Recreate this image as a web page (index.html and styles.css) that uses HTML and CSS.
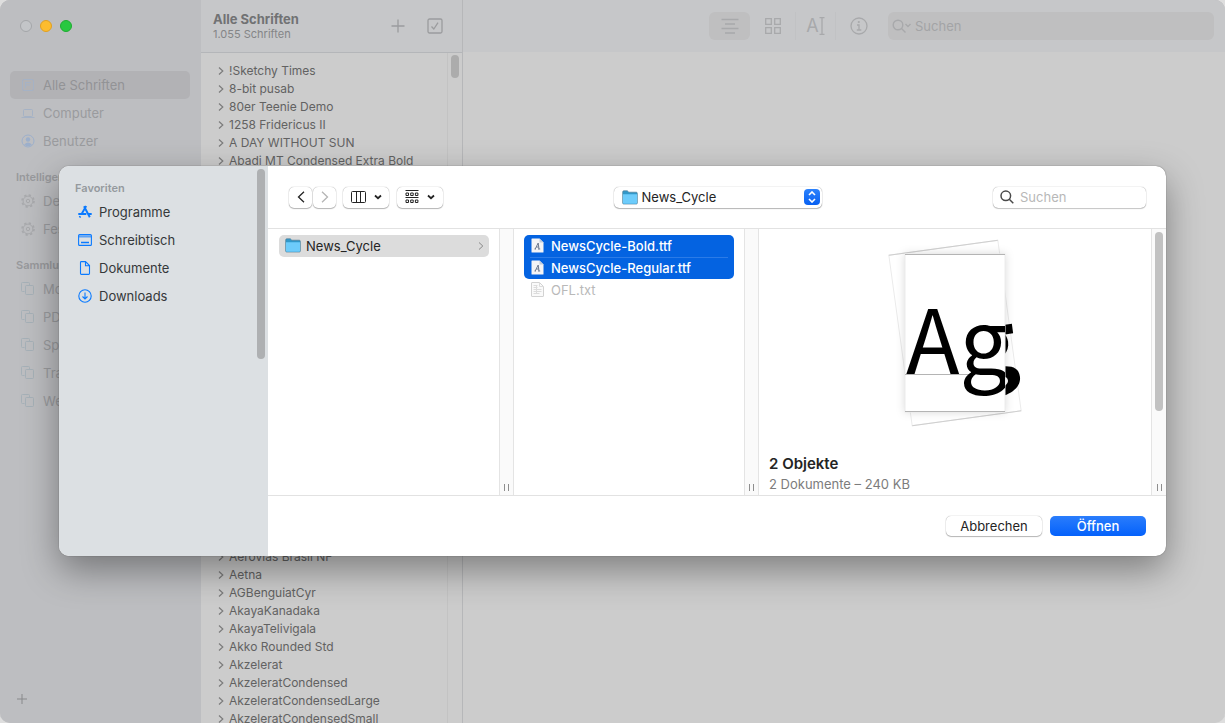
FILE: index.html
```html
<!DOCTYPE html>
<html lang="de">
<head>
<meta charset="utf-8">
<meta name="viewport" content="width=device-width, initial-scale=1">
<title>Schriftsammlung</title>
<link rel="stylesheet" href="styles.css">
</head>
<body>
<svg class="defs" width="0" height="0" aria-hidden="true">
  <symbol id="copy" viewBox="0 0 14 14"><path d="M3.500 9.500h-2a1 1 0 0 1-1-1v-7a1 1 0 0 1 1-1h6a1 1 0 0 1 1 1v1.500"/><rect x="4.500" y="3.500" width="8" height="9" rx="1"/></symbol>
  <symbol id="gear" viewBox="0 0 14 14"><circle cx="7" cy="7" r="4.900"/><circle cx="7" cy="7" r="1.700"/><circle cx="7" cy="7" r="6" stroke-width="1.600" stroke-dasharray="2.300 2.410"/></symbol>
  <symbol id="chevron" viewBox="0 0 6 10"><path d="M1 1.500 4.800 5 1 8.500"/></symbol>
  <symbol id="down" viewBox="0 0 8 6"><path d="M1 1.500 4 4.200 7 1.500"/></symbol>
  <symbol id="folder" viewBox="0 0 16 15"><path d="M.7 2Q.7.8 1.800.8h3.500l1.500 1.400h7.400q1.100 0 1.100 1.100V13q0 1-1 1H1.700q-1 0-1-1z" fill="#3198c9" stroke="#507f99" stroke-width=".7"/><path d="M1 4.300h14V13q0 .7-.8.7H1.800Q1 13.700 1 13z" fill="#6dccfb"/></symbol>
  <symbol id="fontfile" viewBox="0 0 13 15"><path d="M.5 1q0-.5.5-.5h7.500l4 4V14q0 .5-.5.5H1q-.5 0-.5-.5z" fill="#f4f4f6"/><path d="m8.500.500 4 4h-3.500q-.5 0-.5-.5z" fill="#c3ccda"/><path d="M3.500 11h1.500M4.200 11 7.200 5l.8 6M7 11h2.200M5.200 9h2.600" fill="none" stroke="#6f7a90"/></symbol>
  <symbol id="textfile" viewBox="0 0 13 15"><path d="M.5 1q0-.5.5-.5h7.500l4 4V14q0 .5-.5.5H1q-.5 0-.5-.5z" fill="#fafafa" stroke="#d2d2d2"/><path d="M8.500.500v4h4M2.500 3.500h4M2.500 5.500h4M2.500 7.500h8M2.500 9.500h8M2.500 11.500h6M5.500 3v9" fill="none" stroke="#dcdcdc"/></symbol>
</svg>

<div class="window">
  <aside class="sidebar">
    <div class="lights">
      <button class="light" aria-label="Schließen"></button>
      <button class="light light-yellow" aria-label="Minimieren"></button>
      <button class="light light-green" aria-label="Zoomen"></button>
    </div>
    <nav class="library">
      <a class="nav-item selected" href="#alle"><svg class="icon blue" viewBox="0 0 14 14"><rect x="1.500" y="1.500" width="11" height="11" rx="1.500"/><path d="M4.500 4v6M4.500 4.500H10M5 7h4"/></svg>Alle Schriften</a>
      <a class="nav-item" href="#computer"><svg class="icon blue" viewBox="0 0 14 14"><rect x="2.500" y="3.500" width="9" height="7" rx="1"/><path d="M.5 11.500h13"/></svg>Computer</a>
      <a class="nav-item" href="#benutzer"><svg class="icon blue user" viewBox="0 0 14 14"><circle cx="7" cy="7" r="6"/><circle class="fill" cx="7" cy="5.500" r="2.200"/><path class="fill" d="M3.200 10.700Q7 6.500 10.800 10.700 7 13.800 3.200 10.700z"/></svg>Benutzer</a>
      <h2 class="nav-heading">Intelligente</h2>
      <a class="nav-item" href="#deutsch"><svg class="icon grey"><use href="#gear"/></svg>Deutsch</a>
      <a class="nav-item" href="#feste-breite"><svg class="icon grey"><use href="#gear"/></svg>Feste Breite</a>
      <h2 class="nav-heading">Sammlungen</h2>
      <a class="nav-item" href="#modern"><svg class="icon teal"><use href="#copy"/></svg>Modern</a>
      <a class="nav-item" href="#pdf"><svg class="icon teal"><use href="#copy"/></svg>PDF</a>
      <a class="nav-item" href="#spass"><svg class="icon teal"><use href="#copy"/></svg>Spaß</a>
      <a class="nav-item" href="#traditionell"><svg class="icon teal"><use href="#copy"/></svg>Traditionell</a>
      <a class="nav-item" href="#web"><svg class="icon teal"><use href="#copy"/></svg>Web</a>
    </nav>
    <button class="add" aria-label="Sammlung hinzufügen"><svg width="10" height="10" viewBox="0 0 10 10"><path d="M5 0v10M0 5h10"/></svg></button>
  </aside>

  <section class="fonts">
    <header class="fonts-head">
      <div class="fonts-title"><h1>Alle Schriften</h1><p>1.055 Schriften</p></div>
      <button class="tool" aria-label="Schrift hinzufügen"><svg width="14" height="14" viewBox="0 0 14 14"><path d="M7 .5v13M.5 7h13"/></svg></button>
      <button class="tool" aria-label="Schrift prüfen"><svg width="16" height="16" viewBox="0 0 16 16"><rect x="1" y="1" width="14" height="14" rx="1.500"/><path d="m4.500 8.500 2.300 2.500L11 4.700"/></svg></button>
    </header>
    <div class="fonts-body">
      <div class="font-list">
        <ul>
          <li><svg><use href="#chevron"/></svg>!Sketchy Times</li>
          <li><svg><use href="#chevron"/></svg>8-bit pusab</li>
          <li><svg><use href="#chevron"/></svg>80er Teenie Demo</li>
          <li><svg><use href="#chevron"/></svg>1258 Fridericus II</li>
          <li><svg><use href="#chevron"/></svg>A DAY WITHOUT SUN</li>
          <li><svg><use href="#chevron"/></svg>Abadi MT Condensed Extra Bold</li>
        </ul>
        <ul class="later">
          <li><svg><use href="#chevron"/></svg>Aerovias Brasil NF</li>
          <li><svg><use href="#chevron"/></svg>Aetna</li>
          <li><svg><use href="#chevron"/></svg>AGBenguiatCyr</li>
          <li><svg><use href="#chevron"/></svg>AkayaKanadaka</li>
          <li><svg><use href="#chevron"/></svg>AkayaTelivigala</li>
          <li><svg><use href="#chevron"/></svg>Akko Rounded Std</li>
          <li><svg><use href="#chevron"/></svg>Akzelerat</li>
          <li><svg><use href="#chevron"/></svg>AkzeleratCondensed</li>
          <li><svg><use href="#chevron"/></svg>AkzeleratCondensedLarge</li>
          <li><svg><use href="#chevron"/></svg>AkzeleratCondensedSmall</li>
        </ul>
      </div>
      <div class="track"><div class="thumb"></div></div>
    </div>
  </section>

  <main class="detail">
    <header class="detail-bar">
      <button class="view view-on" aria-label="Beispiel"><svg width="18" height="16" viewBox="0 0 18 16"><path d="M.5 1.500h17M4 6h10M.5 10.500h17M4 15h10"/></svg></button>
      <button class="view" aria-label="Raster"><svg width="16" height="16" viewBox="0 0 16 16"><path d="M.7.700h5.600v5.600H.7zM9.700.700h5.600v5.600H9.700zM.7 9.700h5.600v5.600H.7zM9.700 9.700h5.600v5.600H9.700z"/></svg></button>
      <button class="view ruled" aria-label="Eigener Text"><span class="letter">A</span><svg width="6" height="18" viewBox="0 0 6 18"><path d="M.5.500h5M.5 17.500h5M3 .5v17"/></svg></button>
      <button class="view" aria-label="Informationen"><svg width="18" height="18" viewBox="0 0 18 18"><circle cx="9" cy="9" r="8"/><circle class="dot" cx="8.800" cy="5" r="1.100"/><path d="M7 8h2v5M6.800 13h4.500"/></svg></button>
      <label class="search-main"><svg width="20" height="14" viewBox="0 0 20 14"><circle cx="6" cy="6" r="4.800"/><path d="m9.500 9.500 4 4M13.500 5l2.500 2.500L18.500 5"/></svg><input type="search" placeholder="Suchen" aria-label="Schriften suchen"></label>
    </header>
  </main>
</div>

<div class="dialog" role="dialog" aria-label="Öffnen">
  <aside class="places">
    <h2>Favoriten</h2>
    <a href="#programme"><svg viewBox="0 0 14 14"><path d="M6 1.300 11.800 12.300M8.200 1 3.300 9.500M.3 9h8M10.300 9h3.400M2.300 11.200l-.7 1.300" stroke-width="1.900"/></svg>Programme</a>
    <a href="#schreibtisch"><svg viewBox="0 0 14 14"><rect x=".6" y="1.600" width="12.800" height="10.800" rx="1"/><path d="M1 3.500h12" stroke-width="1.800" opacity=".6"/><path d="M3 9.500h8" stroke-width="1.600"/></svg>Schreibtisch</a>
    <a href="#dokumente"><svg viewBox="0 0 14 14"><path d="M3.500.6h4l4 4v8q0 .8-.8.8H3.300q-.8 0-.8-.8V1.400q0-.8.8-.8zM7.500.800v4h4"/></svg>Dokumente</a>
    <a href="#downloads"><svg viewBox="0 0 14 14"><circle cx="7" cy="7" r="6.200"/><path d="M7 3.500V10M4.500 7.500 7 10l2.500-2.500"/></svg>Downloads</a>
    <div class="places-thumb"></div>
  </aside>
  <div class="browser">
    <header class="browser-bar">
      <div class="controls">
        <div class="history">
          <button class="control" aria-label="Zurück"><svg width="8" height="12" viewBox="0 0 8 12"><path d="M7 .8 1.500 6 7 11.200"/></svg></button>
          <button class="control" aria-label="Vorwärts" disabled><svg width="8" height="12" viewBox="0 0 8 12"><path d="M1 .8 6.500 6 1 11.200"/></svg></button>
        </div>
        <button class="control wide" aria-label="Darstellung"><svg class="thin" width="15" height="12" viewBox="0 0 15 12"><rect x=".5" y=".5" width="14" height="11" rx="1"/><path d="M5.500.5v11M9.500.5v11"/></svg><svg class="arrow"><use href="#down"/></svg></button>
        <button class="control wide" aria-label="Gruppieren"><svg class="thin" width="14" height="14" viewBox="0 0 14 14"><path d="M.5.500h13M.5 7.500h13"/><path d="M1 3h2.500v2.500H1zM5.700 3h2.500v2.500H5.700zM10.400 3h2.500v2.500h-2.500zM1 10h2.500v2.500H1zM5.700 10h2.500v2.500H5.700zM10.400 10h2.500v2.500h-2.500z"/></svg><svg class="arrow"><use href="#down"/></svg></button>
      </div>
      <div class="path">
        <svg class="folder"><use href="#folder"/></svg>
        <select aria-label="Ordner"><option>News_Cycle</option></select>
        <span class="stepper"><svg width="8" height="12" viewBox="0 0 8 12"><path d="m1 4 3-3 3 3M1 8l3 3 3-3"/></svg></span>
      </div>
      <label class="search"><svg width="14" height="14" viewBox="0 0 14 14"><circle cx="5.800" cy="5.800" r="4.800"/><path d="m9.300 9.300 4 4"/></svg><input type="search" placeholder="Suchen" aria-label="Dateien suchen"></label>
    </header>
    <div class="columns">
      <ul class="column">
        <li class="open"><svg class="folder"><use href="#folder"/></svg>News_Cycle<svg class="more"><use href="#chevron"/></svg></li>
      </ul>
      <div class="divider"><i></i></div>
      <ul class="column">
        <li class="chosen first"><svg class="file"><use href="#fontfile"/></svg>NewsCycle-Bold.ttf</li>
        <li class="chosen last"><svg class="file"><use href="#fontfile"/></svg>NewsCycle-Regular.ttf</li>
        <li class="dim"><svg class="file"><use href="#textfile"/></svg>OFL.txt</li>
      </ul>
      <div class="divider"><i></i></div>
      <section class="preview">
        <svg class="sheets" width="150" height="200" viewBox="0 0 150 200" role="img" aria-label="Schriftvorschau">
          <defs><clipPath id="page"><rect x="25" y="21" width="100" height="158"/></clipPath></defs>
          <g transform="rotate(-7.800 75 100)">
            <rect class="back" x="20" y="14" width="110" height="172"/>
            <path class="edge" d="M20 14h110M20 186h110"/>
            <text class="bold" x="26" y="148">Ag</text>
          </g>
          <rect class="front" x="25" y="21" width="100" height="158"/>
          <path class="edge strong" d="M25 21.500h100M25 178.500h100M25 141.500h100"/>
          <text class="sample" x="26" y="141" clip-path="url(#page)">Ag</text>
        </svg>
        <h2>2 Objekte</h2>
        <p>2 Dokumente – 240 KB</p>
      </section>
      <div class="divider end"><div class="end-thumb"></div><i></i></div>
    </div>
    <footer class="actions">
      <button class="button">Abbrechen</button>
      <button class="button primary">Öffnen</button>
    </footer>
  </div>
</div>
</body>
</html>
```
FILE: styles.css
```css
* { box-sizing: border-box; }
body { margin: 0; background: #dedede; font: 13px/18px Inter, "Noto Sans", sans-serif; color: #242424; overflow: hidden; }
h1, h2, p, ul { margin: 0; padding: 0; }
ul { list-style: none; }
a { color: inherit; text-decoration: none; }
button, input, select { font: inherit; color: inherit; border: 0; padding: 0; margin: 0; background: none; }
svg { fill: none; stroke: currentColor; flex: none; }
.defs { position: absolute; }

.window { display: flex; height: 100vh; border-radius: 10px; overflow: hidden; background: #ccc; box-shadow: inset 0 1px 0 #b9babb; }
.sidebar { width: 201px; flex: none; display: flex; flex-direction: column; background: #bdbec1; color: #9a9b9e; }
.lights { display: flex; gap: 8px; padding: 20px; height: 71px; }
.light { width: 12px; height: 12px; border-radius: 50%; background: #c3c5c8; border: 1px solid #a4a6a9; }
.light-yellow { background: #fdbc2e; border-color: #dfa023; }
.light-green { background: #28c840; border-color: #1eac31; }
.library { flex: 1; padding: 0 11px 0 10px; }
.nav-item { display: flex; align-items: center; gap: 8px; height: 28px; padding-left: 11px; border-radius: 5px; }
.nav-item.selected { background: #b2b2b5; color: #929396; }
.nav-heading { padding: 12px 0 0 6px; font-size: 11px; line-height: 20px; font-weight: 600; color: #98999c; }
.icon { width: 14px; height: 14px; }
.blue { color: #a5b2c5; }
.user { color: #9cafcb; }
.grey { color: #a9aaad; }
.teal { color: #a6b1b8; }
.fill { fill: currentColor; stroke: none; }
.add { align-self: flex-start; display: flex; padding: 0 17px 19px; color: #88898b; }

.fonts { width: 262px; flex: none; display: flex; flex-direction: column; border-right: 1px solid #b6b7b9; }
.fonts-head { display: flex; align-items: center; gap: 22px; height: 53px; padding: 0 19px 0 12px; background: #c6c7c9; border-bottom: 1px solid #b4b6b9; color: #9b9c9e; }
.fonts-title { flex: 1; }
.fonts-title h1 { font-size: 13px; line-height: 16px; color: #717274; }
.fonts-title p { font-size: 11px; line-height: 14px; color: #848587; }
.tool { display: flex; }
.tool svg { stroke-width: 1.3; }
.fonts-body { flex: 1; display: flex; min-height: 0; }
.font-list { flex: 1; overflow: hidden; padding-top: 9px; font-size: 12px; color: #626262; }
.font-list li { display: flex; align-items: center; gap: 5px; height: 18px; padding-left: 17px; white-space: nowrap; }
.font-list svg { width: 6px; height: 10px; color: #7c7c7c; stroke-width: 1.2; }
.later { margin-top: 378px; }
.track { width: 15px; border-left: 1px solid #c3c3c3; padding: 2px 3px; }
.thumb { width: 8px; height: 23px; border-radius: 4px; background: #acacac; }

.detail { flex: 1; }
.detail-bar { display: flex; align-items: center; gap: 2px; height: 52px; padding: 0 11px; background: #c6c7c9; color: #a8a9ab; justify-content: flex-end; }
.view { display: flex; align-items: center; justify-content: center; width: 41px; height: 28px; border-radius: 6px; }
.view svg { stroke-width: 1.3; }
.view-on { background: #bfbfc0; }
.ruled { border: solid #c1c2c4; border-width: 0 1px; border-radius: 0; }
.letter { font: 18px/20px Inter, sans-serif; }
.dot { fill: currentColor; stroke: none; }
.search-main { display: flex; align-items: center; gap: 3px; width: 326px; height: 28px; margin-left: 7px; padding-left: 4px; background: #bfbfc0; border-radius: 6px; }
.search-main svg { stroke-width: 1.4; }
.search-main input { flex: 1; min-width: 0; outline: 0; }
.search-main input::placeholder { color: #a3a4a6; opacity: 1; }

.dialog { position: absolute; top: 166px; left: 59px; right: 59px; display: flex; border-radius: 10px; overflow: hidden; background: #fff; box-shadow: 0 0 1px #444, 0 14px 36px rgba(0, 0, 0, .38); }
.places { position: relative; width: 209px; flex: none; background: #dce0e3; padding: 12px 16px; }
.places h2 { font-size: 11px; line-height: 20px; font-weight: 600; color: #959a9e; }
.places a { display: flex; align-items: center; gap: 7px; height: 28px; padding-left: 3px; color: #35383a; }
.places a svg { width: 14px; height: 14px; color: #0a7aff; stroke-width: 1.1; }
.places-thumb { position: absolute; top: 3px; right: 3px; width: 8px; height: 190px; border-radius: 4px; background: #aeb0b2; }
.browser { flex: 1; min-width: 0; }
.browser-bar { display: grid; grid-template-columns: 1fr 208px 1fr; align-items: center; height: 63px; padding: 0 20px 0 21px; border-bottom: 1px solid #e2e2e2; }
.controls, .history, .control { display: flex; align-items: center; }
.controls { gap: 7px; }
.history { gap: 1px; }
.control { justify-content: center; gap: 8px; width: 23px; height: 21px; border-radius: 5px; background: #fff; box-shadow: 0 0 1px #888, 0 1px 1px #bbb; }
.control svg { stroke-width: 1.3; }
.control .thin { stroke-width: 1; }
.control:disabled { color: #b5b5b5; }
.wide { width: 46px; }
.wide + .wide { margin-left: 1px; }
.control .arrow { width: 8px; height: 6px; stroke-width: 1.8; }
.path { display: flex; align-items: center; gap: 4px; height: 21px; padding: 0 2px 0 8px; border-radius: 5px; box-shadow: 0 0 1px #888, 0 1px 1px #bbb; }
.path select { flex: 1; min-width: 0; appearance: none; outline: 0; }
.folder { width: 16px; height: 15px; stroke: none; }
.stepper { display: flex; align-items: center; justify-content: center; width: 16px; height: 16px; border-radius: 4px; background: linear-gradient(#2c82fc, #0760f2); color: #fff; }
.stepper svg { stroke-width: 1.6; }
.search { justify-self: end; display: flex; align-items: center; gap: 6px; width: 153px; height: 21px; padding-left: 7px; border-radius: 5px; box-shadow: 0 0 1px #888, 0 1px 1px #ccc; color: #4a4a4a; }
.search svg { stroke-width: 1.5; }
.search input { width: 110px; outline: 0; }
.search input::placeholder { color: #b8b8b8; opacity: 1; }

.columns { display: flex; height: 267px; border-bottom: 1px solid #e2e2e2; }
.column { width: 231px; flex: none; padding: 6px 10px 6px 11px; }
.column li { position: relative; display: flex; align-items: center; gap: 7px; height: 22px; padding: 0 0 1px 7px; border-radius: 5px; }
.column .open { background: #dcdcdc; gap: 5px; padding-left: 6px; }
.more { width: 6px; height: 10px; margin: 0 5px 0 auto; color: #888; }
.file { width: 13px; height: 15px; stroke: none; }
.column .chosen { background: #0463e1; color: #fff; font-weight: 500; }
.column .first { border-radius: 5px 5px 0 0; }
.column .last { border-radius: 0 0 5px 5px; }
.last::before { content: ""; position: absolute; top: 0; left: 6px; right: 6px; height: 1px; background: #2b7be7; }
.column .dim { color: #b9b9b9; }
.divider { display: flex; flex-direction: column; align-items: center; justify-content: flex-end; width: 15px; flex: none; padding-bottom: 4px; margin-right: -1px; background: #fafafa; border: solid #e4e4e4; border-width: 0 1px; }
.divider i { width: 5px; height: 7px; border: solid #8e8e8e; border-width: 0 1px; }
.end { justify-content: space-between; margin-right: 0; padding-top: 3px; border-right: 0; }
.end-thumb { width: 8px; height: 179px; border-radius: 4px; background: #c1c1c1; }
.preview { flex: 1; min-width: 0; padding: 4px 11px 0; overflow: hidden; }
.sheets { display: block; margin: 0 auto 20px; }
.preview h2 { font-size: 15px; line-height: 22px; font-weight: 600; color: #242424; }
.preview p { line-height: 18px; color: #7c7c7c; }
.back { fill: #fff; stroke: #ebebeb; }
.front { fill: #fff; stroke: #ececec; filter: drop-shadow(0 0 4px rgba(0, 0, 0, .14)); }
.edge { stroke: #cfcfcf; }
.strong { stroke: #b4b4b4; }
.sample, .bold { font: 88px "Noto Sans CJK SC", "Open Sans", sans-serif; fill: #000; stroke: none; }
.bold { font-weight: 700; }
.actions { display: flex; align-items: center; justify-content: flex-end; gap: 8px; height: 60px; padding: 0 20px; }
.button { width: 96px; height: 20px; border-radius: 5px; background: #fff; box-shadow: 0 0 1px #888, 0 1px 1px #bbb; line-height: 20px; }
.primary { background: linear-gradient(#2a7dfc, #0461fb); color: #fff; font-weight: 500; box-shadow: none; }
```
